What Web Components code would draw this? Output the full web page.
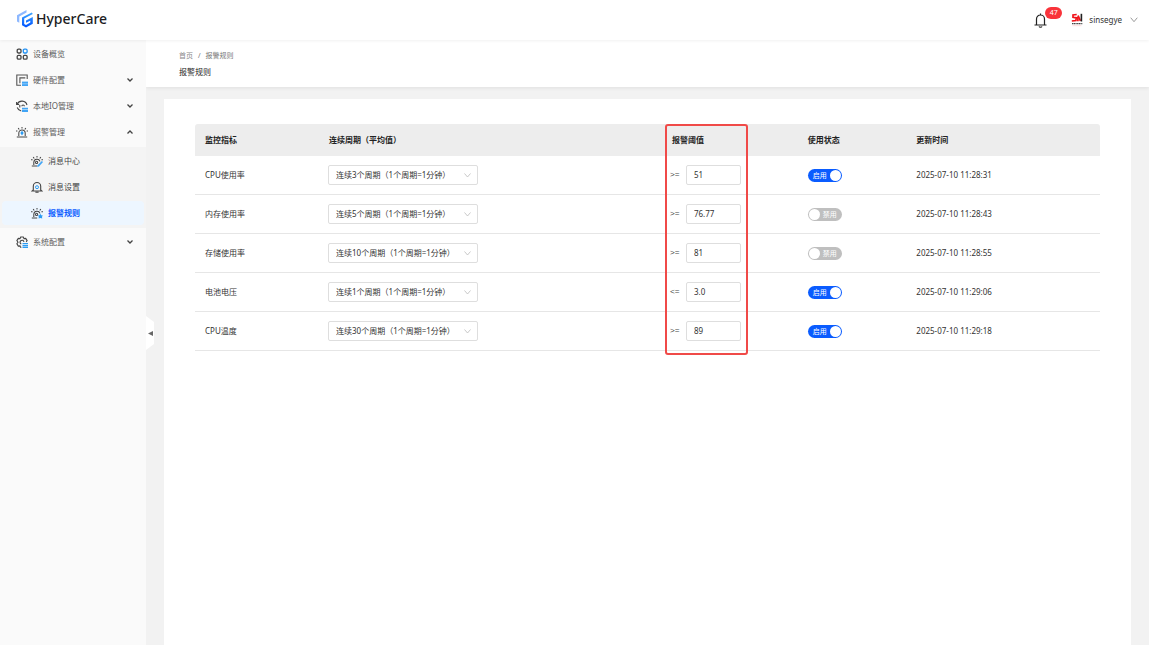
<!DOCTYPE html>
<html lang="zh-CN">
<head>
<meta charset="utf-8">
<meta name="viewport" content="width=device-width, initial-scale=1">
<title>HyperCare - 报警规则</title>
<style>
  html, body { margin: 0; height: 100%; }
  body { font: 8px/12px "Noto Sans", "Noto Sans CJK SC", sans-serif; color: #333; background: #f2f2f2; }
</style>
</head>
<body>
<hc-app></hc-app>
<script>
const define = (name, render, after) => customElements.define(name, class extends HTMLElement {
  connectedCallback() {
    if (this.shadowRoot) return;
    this.attachShadow({ mode: "open" }).innerHTML = render(this);
    if (after) after(this);
  }
});

const icons = {
  overview: `<g fill="none" stroke="#444" stroke-width="1.3"><rect x="1.2" y="1.2" width="3.8" height="3.8" rx="1.2"/><rect x="7.3" y="1.2" width="3.8" height="3.8" rx="1.2" stroke="#1e90f5"/><rect x="1.2" y="7.3" width="3.8" height="3.8" rx="1.2"/><rect x="7.3" y="7.3" width="3.8" height="3.8" rx="1.2"/></g>`,
  hardware: `<g fill="none" stroke="#555" stroke-width="1.1"><path d="M11.2 5V1H.8v10.2H5"/><path d="M9.3 3.9H3.9v5.3"/></g><path d="M6 7.6h6V12H6z" fill="#42a5f5"/><path d="M6 9.8h6" stroke="#d7edff" stroke-width=".5"/>`,
  io: `<g fill="none" stroke="#444" stroke-width="1.1"><path d="M1.2 4.2A5.2 5.2 0 0 1 11 5M.6 2v2.5h2.6M1.2 7.5c.8 2 2.2 3.2 4 3.5"/><path d="M3.8 5v2.6M5.8 6.3c0-1.700 2.600-1.700 2.600 0"/></g><path d="M6 7.800h6v1.700H6zM6 10.100h6V12H6z" fill="#42a5f5"/>`,
  alarm: `<g fill="none" stroke="#444" stroke-width="1.05"><path d="M2.8 10V7.2a3.2 3.2 0 0 1 6.4 0V10M.8 11h10.4M6 1v1.6M2.2 2l1 1.5M9.8 2l-1 1.5M0 5h1.4M10.6 5H12"/></g><path d="M6 4.8 7.7 7 6 9.5 4.3 7z" fill="#2c9cf3"/>`,
  center: `<g fill="none" stroke="#444" stroke-width="1.05"><path d="M2.8 10V7.2a3.2 3.2 0 0 1 6.2-.8M.8 11h5.4M6 1v1.6M2.2 2l1 1.5M9.8 2l-1 1.5M0 4.8h1.6M10.4 4.8H12"/><circle cx="5.6" cy="7.4" r="1.1"/></g><path d="m10.8 6 1.2 1-4 4.5-1.8.4.4-1.7z" fill="#42a5f5"/>`,
  setting: `<g fill="none" stroke="#444" stroke-width="1.1"><path d="M2.3 9V5.2a3.7 3.7 0 0 1 7.4 0V9l1.2 1H1.1zM4.4 11.3h3.2"/></g><circle cx="6" cy="6.2" r="1.5" fill="none" stroke="#2c9cf3"/>`,
  rule: `<g fill="none" stroke="#444" stroke-width="1.05"><path d="M2.8 10V7.2a3.2 3.2 0 0 1 6.2-.8M.8 11h5.4M6 1v1.6M2.2 2l1 1.5M9.8 2l-1 1.5M0 4.8h1.6M10.4 4.8H12"/><circle cx="5.6" cy="7.4" r="1.1"/></g><path d="m9.3 6.800.900 1.400 1.700.300-.900 1.300.200 1.800-1.900-.500-1.700.500.200-1.800-.900-1.300 1.600-.300z" fill="#2c9cf3"/>`,
  system: `<g fill="none" stroke="#444" stroke-width="1.1"><path d="M5.4 11.300H4.500L4 9.900l-1.700.200L.900 7.800 2 6.200.900 4.600l1.400-2.200L4 2.600 4.700 1h2.600L8 2.600l1.700-.200 1.400 2.200-.900 1.300"/><path d="M5.300 8.100A2 2 0 1 1 8 5.800"/></g><path d="M6.500 7H12v1.300H6.500zM6.500 8.900H12v1.300H6.500zM6.500 10.800H12V12H6.500z" fill="#2c9cf3"/>`
};

define("hc-app", () => `
<style>
  :host { display: grid; grid-template: auto 1fr / 146px minmax(0, 1fr); min-height: 100vh; }
  hc-header { grid-column: 1 / -1; }
  main { display: flex; flex-direction: column; }
  section { flex: 1; margin: 12px 18px 0; padding: 25px 31px; background: #fff; }
</style>
<hc-header></hc-header>
<hc-sidebar></hc-sidebar>
<main>
  <hc-page-head></hc-page-head>
  <section><hc-rule-table></hc-rule-table></section>
</main>`);

define("hc-header", () => `
<style>
  :host { display: flex; align-items: center; height: 40px; padding: 0 11px 0 17px; box-sizing: border-box; background: #fff; box-shadow: 0 1px 3px #0000000f; position: relative; z-index: 2; }
  a { display: flex; align-items: center; gap: 3px; margin-right: auto; color: #1c1c1e; text-decoration: none; font-size: 14px; line-height: 20px; font-weight: 500; padding-bottom: 2px; }
  button { border: 0; padding: 0; background: none; color: #333; font: inherit; display: flex; align-items: center; }
  .bell { position: relative; margin-right: 24px; }
  .badge { position: absolute; left: 11px; top: -6px; width: 17px; height: 12px; border-radius: 6px; background: #f9333a; color: #fff; font-size: 7px; line-height: 12px; text-align: center; }
  .user { gap: 6px; }
  .user .chev { margin-left: 2px; }
</style>
<a href="#"><svg width="16" height="18" viewBox="0 0 16 18"><defs><linearGradient id="b" x1="0" y1="0" x2="0" y2="1"><stop stop-color="#3da5ff"/><stop offset="1" stop-color="#0052ff"/></linearGradient></defs><path d="M0 5.200 9.500 0v2.500L2.300 6.500v6.200L0 11.500z" fill="#8db8ff"/><path d="M14.800 2.600 5 7.500v7.700L9 17.500l6.800-3.800V7L9 10.500v2.300l4.300-2.100v1.700L9 14.900l-1.800-1V8.600L15.800 4z" fill="url(#b)"/></svg><span>HyperCare</span></a>
<button class="bell" aria-label="通知"><svg width="13" height="15" viewBox="0 0 13 15" fill="none" stroke="#222" stroke-width="1.2"><path d="M2.500 11.800V6a4 4 0 0 1 8 0v5.800M.5 12h12M6.500 2V.5M5 13.500c.5 1 2.500 1 3 0"/></svg><span class="badge">47</span></button>
<button class="user"><svg width="12" height="14" viewBox="0 0 12 14"><g fill="none" stroke="#f01218" stroke-width="1.700"><path d="M5.700 1.500 2 2v2.300l3.200.500-.300 2.700L.8 8M6.900 8.300V3.500"/><path d="m7.100 2.500 2.300 5.300"/></g><path d="M10.400.8V8.500" stroke="#222" stroke-width="1.600"/><path d="M1 10.600h10.500" stroke="#444" stroke-width="1.400" stroke-dasharray="1.300 .4"/><path d="M1.500 12.700h9" stroke="#ffdede"/></svg><span>sinsegye</span><svg class="chev" width="8" height="6" viewBox="0 0 8 6" fill="none" stroke="#999"><path d="m.7.700 3.300 4 3.300-4"/></svg></button>`);

define("hc-sidebar", () => `
<style>
  :host { display: block; position: relative; background: #fafafa; padding-top: 1px; }
  nav > div { margin: 2px 0 1px; padding: 1px 0 2px; background: #f4f4f4; }
  .fold { position: absolute; left: 100%; top: 276px; width: 8px; height: 34px; padding: 0; border: 0; background: #fff; clip-path: polygon(0 0, 100% 18%, 100% 82%, 0 100%); display: grid; place-items: center; }
</style>
<nav>
  <hc-menu-item icon="overview">设备概览</hc-menu-item>
  <hc-menu-item icon="hardware" arrow="down">硬件配置</hc-menu-item>
  <hc-menu-item icon="io" arrow="down">本地IO管理</hc-menu-item>
  <hc-menu-item icon="alarm" arrow="up">报警管理</hc-menu-item>
  <div>
    <hc-menu-item icon="center" sub>消息中心</hc-menu-item>
    <hc-menu-item icon="setting" sub>消息设置</hc-menu-item>
    <hc-menu-item icon="rule" sub active>报警规则</hc-menu-item>
  </div>
  <hc-menu-item icon="system" arrow="down">系统配置</hc-menu-item>
</nav>
<button class="fold" aria-label="收起菜单"><svg width="5" height="5" viewBox="0 0 5 5"><path d="M0 2.500 5 0v5z" fill="#666"/></svg></button>`);

define("hc-menu-item", el => `
<style>
  :host { display: block; padding: 1px 2px; }
  a { display: flex; align-items: center; gap: 5px; height: 24px; padding: 0 10px 0 14px; border-radius: 4px; color: #5c5c5c; text-decoration: none; }
  :host([sub]) a { padding-left: 29px; color: #444; }
  :host([active]) a { background: #edf6ff; color: #0a5cff; font-weight: 700; }
  .arrow { margin-left: auto; }
  :host([arrow="up"]) .arrow { transform: rotate(180deg); }
</style>
<a href="#"><svg width="12" height="12" viewBox="0 0 12 12">${icons[el.getAttribute("icon")]}</svg><span><slot></slot></span>${
  el.hasAttribute("arrow") ? `<svg class="arrow" width="8" height="6" viewBox="0 0 8 6" fill="none" stroke="#444" stroke-width="1.300"><path d="m1.500 1.500 2.500 2.500 2.500-2.500"/></svg>` : ""}</a>`);

define("hc-page-head", () => `
<style>
  :host { display: block; padding: 10px 33px 9px; background: #fff; box-shadow: 0 1px 4px #00000014; }
  nav { display: flex; gap: 5px; font-size: 7px; color: #777; }
  a { color: #888; text-decoration: none; }
  h1 { margin: 4px 0 0; font-size: 8px; line-height: 12px; font-weight: 400; color: #222; }
</style>
<nav aria-label="面包屑"><a href="#">首页</a><span>/</span><span>报警规则</span></nav>
<h1>报警规则</h1>`);

define("hc-rule-table", () => {
  const rows = [
    ["CPU使用率", 3, ">=", "51", true, "2025-07-10 11:28:31"],
    ["内存使用率", 5, ">=", "76.77", false, "2025-07-10 11:28:43"],
    ["存储使用率", 10, ">=", "81", false, "2025-07-10 11:28:55"],
    ["电池电压", 1, "<=", "3.0", true, "2025-07-10 11:29:06"],
    ["CPU温度", 30, ">=", "89", true, "2025-07-10 11:29:18"]
  ];
  return `
<style>
  :host { display: block; position: relative; }
  table { width: 100%; table-layout: fixed; border-collapse: separate; border-spacing: 0; }
  th, td { box-sizing: border-box; padding: 0 10px; text-align: left; }
  th { height: 32px; background: #ededed; font-weight: 700; color: #222; border-bottom: 1px solid #ededed; }
  td { height: 39px; border-bottom: 1px solid #e6e6e6; }
  th:first-child { border-top-left-radius: 3px; }
  th:last-child { border-top-right-radius: 3px; }
  th:nth-child(1) { width: 13.700%; }
  th:nth-child(2) { width: 37.900%; }
  th:nth-child(3) { width: 15%; position: relative; }
  th:nth-child(4) { width: 12%; }
  td:nth-child(2) { padding-left: 9px; }
  td:nth-child(3) { padding-left: 8px; }
  .frame { position: absolute; left: 3px; top: 0; width: 83px; height: 231px; box-sizing: border-box; border: 2px solid #f04a48; border-radius: 3px; pointer-events: none; }
</style>
<table>
  <thead><tr><th>监控指标</th><th>连续周期（平均值）</th><th>报警阈值<div class="frame"></div></th><th>使用状态</th><th>更新时间</th></tr></thead>
  <tbody>${rows.map(([name, n, op, value, on, time]) => `<tr>
    <td>${name}</td>
    <td><hc-cycle-select cycles="${n}" label="${name}连续周期"></hc-cycle-select></td>
    <td><hc-threshold value="${value}" label="${name}报警阈值">${op.replace("<", "&lt;").replace(">", "&gt;")}</hc-threshold></td>
    <td><hc-switch ${on ? "on" : ""} label="${name}使用状态"></hc-switch></td>
    <td>${time}</td></tr>`).join("")}
  </tbody>
</table>`;
});

define("hc-cycle-select", el => `
<style>
  :host { display: grid; align-items: center; width: 150px; }
  select { grid-area: 1 / 1; width: 100%; height: 20px; padding: 0 20px 0 7px; border: 1px solid #dedede; border-radius: 2px; background: #fff; color: #333; font: inherit; appearance: none; }
  svg { grid-area: 1 / 1; justify-self: end; margin-right: 7px; pointer-events: none; }
</style>
<select aria-label="${el.getAttribute("label")}"><option>连续${el.getAttribute("cycles")}个周期（1个周期=1分钟）</option></select>
<svg width="7" height="5" viewBox="0 0 7 5" fill="none" stroke="#bbb" stroke-width=".8"><path d="m.5.500 3 3.500 3-3.500"/></svg>`);

define("hc-threshold", el => `
<style>
  :host { display: block; }
  label { display: flex; align-items: center; }
  span { width: 16px; white-space: nowrap; font-family: "Liberation Mono", monospace; color: #444; }
  input { width: 55px; height: 20px; box-sizing: border-box; padding: 0 7px 2px; border: 1px solid #dedede; border-radius: 2px; background: #fff; color: #333; font: inherit; }
</style>
<label><span><slot></slot></span><input type="text" value="${el.getAttribute("value")}" aria-label="${el.getAttribute("label")}"></label>`);

define("hc-switch", el => `
<style>
  :host { display: block; }
  label { display: grid; align-items: center; width: 34px; height: 13px; border-radius: 7px; background: #bfbfbf; color: #fff; font-size: 7px; line-height: 13px; }
  label:has(:checked) { background: #0a5cff; }
  input { grid-area: 1 / 1; appearance: none; width: 11px; height: 11px; margin: 0 1px; border-radius: 50%; background: #fff; }
  input:checked { justify-self: end; }
  span { grid-area: 1 / 1; justify-self: end; margin: 0 5px; }
  input:checked + span { justify-self: start; }
</style>
<label><input type="checkbox" role="switch" aria-label="${el.getAttribute("label")}" ${el.hasAttribute("on") ? "checked" : ""}><span></span></label>`,
el => {
  const input = el.shadowRoot.querySelector("input");
  const text = el.shadowRoot.querySelector("span");
  const sync = () => { text.textContent = input.checked ? "启用" : "禁用"; };
  input.addEventListener("change", sync);
  sync();
});
</script>
</body>
</html>
